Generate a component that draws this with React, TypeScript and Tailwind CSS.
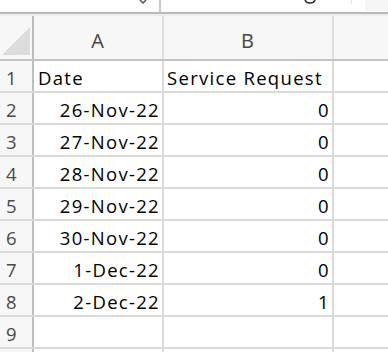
import React from 'react'

const rows = [
  { n: '1', a: 'Date', b: 'Service Request', head: true },
  { n: '2', a: '26-Nov-22', b: '0' },
  { n: '3', a: '27-Nov-22', b: '0' },
  { n: '4', a: '28-Nov-22', b: '0' },
  { n: '5', a: '29-Nov-22', b: '0' },
  { n: '6', a: '30-Nov-22', b: '0' },
  { n: '7', a: '1-Dec-22', b: '0' },
  { n: '8', a: '2-Dec-22', b: '1' },
  { n: '9', a: '', b: '' },
  { n: '', a: '', b: '' },
]

const font = { fontFamily: '"Open Sans", "Noto Sans", sans-serif' }

function CornerCell() {
  return (
    <div className="w-[34px] h-full border-r-2 border-[#bdbdbd] bg-[#f7f7f7] relative">
      <svg width="34" height="43" className="absolute left-0 top-0">
        <polygon points="2,39 30,11 30,39" fill="#dcdcdc" />
      </svg>
    </div>
  )
}

export default function App() {
  return (
    <div className="w-[388px] h-[352px] overflow-hidden bg-white text-black" style={font}>
      {/* formula bar remnant */}
      <div className="h-[12px] flex">
        <div className="w-[159px] relative">
          <svg width="8" height="4" className="absolute left-[139px] top-0">
            <path d="M1 0 L4 3 L7 0" stroke="#555" strokeWidth="1.5" fill="none" />
          </svg>
        </div>
        <div className="w-[2px] bg-[#c8c8c8]" />
        <div className="flex-1 relative">
          <svg width="12" height="5" className="absolute left-[143px] top-0">
            <path d="M1 0 Q2 3 6 3 Q10 3 11 0" stroke="#333" strokeWidth="1.6" fill="none" />
          </svg>
          <div className="absolute left-[190px] top-0 w-[1px] h-[4px] bg-[#e3e3e3]" />
          <div className="absolute right-0 top-0 w-[23px] h-[11px] bg-[#f6f6f6]" />
        </div>
      </div>
      <div className="h-[2px] bg-[#b8b8b8]" />
      <div className="h-[2px] bg-[#ededed]" />

      {/* column headers */}
      <div className="h-[45px] flex bg-[#f7f7f7] border-b-2 border-[#c4c4c4] text-[20px] text-[#454545] tracking-[1px]">
        <CornerCell />
        <div className="w-[130px] border-r-2 border-[#dedede] flex items-center justify-center pt-[6px]">A</div>
        <div className="w-[170px] border-r-2 border-[#dedede] flex items-center justify-center pt-[6px]">B</div>
        <div className="flex-1" />
      </div>

      {/* sheet rows */}
      {rows.map((r, i) => (
        <div key={i} className="h-[32px] flex border-b-2 border-[#dadada] text-[18.5px] font-medium tracking-[1.3px]">
          <div className="w-[34px] bg-[#f7f7f7] border-r-2 border-[#bdbdbd] flex items-center pl-[6px] pt-[4px] text-[#4a4a4a] font-normal">
            {r.n}
          </div>
          <div
            className={
              r.head
                ? 'w-[130px] border-r-2 border-[#dadada] flex items-center pl-[4px] pt-[4px]'
                : 'w-[130px] border-r-2 border-[#dadada] flex items-center justify-end pr-[2px] pt-[4px]'
            }
          >
            {r.a}
          </div>
          <div
            className={
              r.head
                ? 'w-[170px] border-r-2 border-[#dadada] flex items-center pl-[3px] pt-[4px] whitespace-nowrap'
                : 'w-[170px] border-r-2 border-[#dadada] flex items-center justify-end pr-[2px] pt-[4px]'
            }
          >
            {r.b}
          </div>
          <div className="flex-1" />
        </div>
      ))}
    </div>
  )
}
